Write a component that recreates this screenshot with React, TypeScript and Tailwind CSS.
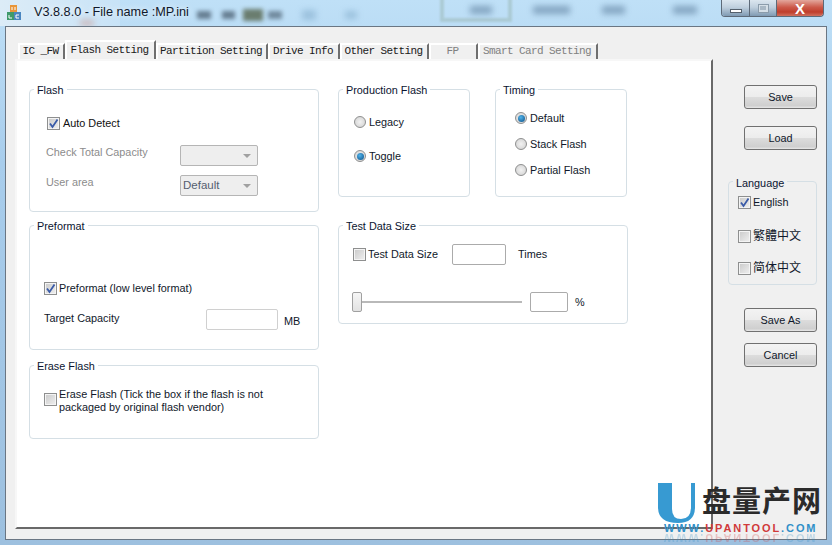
import type { ReactNode } from "react";

const sans = "font-['Liberation_Sans','Noto_Sans_CJK_SC',sans-serif]";

function Group({
  title,
  className,
  children,
}: {
  title: string;
  className: string;
  children?: ReactNode;
}) {
  return (
    <div className={`relative rounded-[4px] border border-[#d5dfe5] ${className}`}>
      <span className="absolute -top-[7px] left-[4px] bg-white px-[3px] leading-[14px] text-[#0a1430]">
        {title}
      </span>
      {children}
    </div>
  );
}

function Check({ on, label, className = "" }: { on?: boolean; label: ReactNode; className?: string }) {
  return (
    <div className={`flex items-center gap-[2px] ${className}`}>
      <span className="flex h-[13px] w-[13px] shrink-0 items-center justify-center border border-[#8e8f8f] bg-[linear-gradient(135deg,#c9c9c9,#f0f0f0)] shadow-[inset_0_0_0_1px_#f4f4f4]">
        {on && (
          <svg width="11" height="11" viewBox="0 0 11 11">
            <path d="M2 5.5 L4.5 9 L9.5 1.5" fill="none" stroke="#3a5ba8" strokeWidth="1.8" />
          </svg>
        )}
      </span>
      <span className="leading-[13px]">{label}</span>
    </div>
  );
}

function Radio({ on, label, className = "" }: { on?: boolean; label: string; className?: string }) {
  return (
    <div className={`flex items-center gap-[3px] ${className}`}>
      <span className="flex h-[12px] w-[12px] shrink-0 items-center justify-center rounded-full border border-[#8e8f8f] bg-[radial-gradient(circle,#f2f2f2,#cfcfcf)]">
        {on && <span className="h-[7px] w-[7px] rounded-full bg-[radial-gradient(circle_at_40%_35%,#4fb2ea,#0b4f86)]" />}
      </span>
      <span className="leading-[14px]">{label}</span>
    </div>
  );
}

function Select({ value, className = "" }: { value?: string; className?: string }) {
  return (
    <div className={`flex h-[21px] w-[78px] items-center justify-between rounded-[2px] border border-[#b5b5b5] bg-[#eeeeee] pl-[2px] pr-[6px] text-[11.5px] text-[#555f70] ${className}`}>
      <span>{value}</span>
      <span className="h-0 w-0 border-x-[4px] border-t-[4px] border-x-transparent border-t-[#a0a0a0]" />
    </div>
  );
}

function Btn({ label, className = "" }: { label: string; className?: string }) {
  return (
    <div className={`ml-[31px] flex h-[24px] w-[73px] items-center justify-center rounded-[3px] border border-[#707070] bg-[linear-gradient(#f3f3f3_0%,#ececec_48%,#dcdcdc_52%,#cfcfcf_90%,#e8e8e8_100%)] leading-none text-[#10182a] ${className}`}>
      {label}
    </div>
  );
}

const tabs = [
  { label: "IC _FW", w: "w-[47px]" },
  { label: "Flash Setting", w: "w-[91px]", active: true },
  { label: "Partition Setting", w: "w-[112px]" },
  { label: "Drive Info", w: "w-[72px]" },
  { label: "Other Setting", w: "w-[89px]" },
  { label: "FP", w: "w-[49px]", off: true },
  { label: "Smart Card Setting", w: "w-[120px]", off: true },
];

function Logo() {
  const url = (
    <>
      <span className="text-[#2f8fc8]">WWW.</span>
      <span className="text-[#d13a3a]">UPANTOOL</span>
      <span className="text-[#2f8fc8]">.COM</span>
    </>
  );
  return (
    <div className="absolute left-[658px] top-[483px] h-[62px] w-[170px]">
      <svg width="38" height="41" viewBox="0 0 38 41" className="absolute left-0 top-0">
        <path
          d="M0 0 H14 V26 Q14 36 23 36 Q33 36 33 24 V0 H37 V24 Q37 40 20 40 Q0 40 0 24 Z"
          fill="#379ad2"
        />
      </svg>
      <div className="absolute left-[44px] top-[-2px] whitespace-nowrap font-['Noto_Sans_CJK_SC',sans-serif] text-[29px] font-bold leading-[36px] tracking-[1px] text-[#2b2b2b]">
        盘量产网
      </div>
      <div className="absolute left-[6px] top-[41px] whitespace-nowrap font-['Liberation_Sans',sans-serif] text-[11px] font-bold leading-[9px] tracking-[1.9px]">
        {url}
      </div>
      <div className="absolute left-[6px] top-[50px] -scale-y-100 whitespace-nowrap font-['Liberation_Sans',sans-serif] text-[11px] font-bold leading-[9px] tracking-[1.9px] opacity-25">
        {url}
      </div>
    </div>
  );
}

export default function App() {
  return (
    <div className={`relative flex h-[545px] w-[832px] flex-col overflow-hidden bg-[linear-gradient(#bfe0f7,#a8cdec_30%,#9dc0df_100%)] text-[10.85px] text-[#10182a] ${sans}`}>
      {/* blurred desktop behind the title bar */}
      <div className="absolute left-0 top-0 h-[26px] w-[120px] bg-[linear-gradient(90deg,#dcecf7,#c8e3f7)]" />
      <div className="absolute left-[80px] top-[20px] h-[6px] w-[14px] bg-[#c98a7c] opacity-50 blur-[3px]" />
      <div className="absolute left-[197px] top-[11px] h-[8px] w-[14px] bg-[#51677a] opacity-80 blur-[2px]" />
      <div className="absolute left-[222px] top-[11px] h-[8px] w-[13px] bg-[#51677a] opacity-80 blur-[2px]" />
      <div className="absolute left-[243px] top-[9px] h-[12px] w-[20px] bg-[#56654e] opacity-80 blur-[2px]" />
      <div className="absolute left-[268px] top-[11px] h-[8px] w-[14px] bg-[#51677a] opacity-70 blur-[2px]" />
      <div className="absolute left-[302px] top-[10px] h-[10px] w-[14px] bg-[#8db5d3] opacity-70 blur-[3px]" />
      <div className="absolute left-[345px] top-[11px] h-[8px] w-[12px] bg-[#8db5d3] opacity-70 blur-[3px]" />
      <div className="absolute left-[440px] top-[-6px] h-[28px] w-[72px] border-[4px] border-[#a7c6cc] opacity-80 blur-[1px]" />
      <div className="absolute left-[470px] top-[6px] h-[8px] w-[22px] bg-[#6a8caa] opacity-70 blur-[3px]" />
      <div className="absolute left-[533px] top-[6px] h-[8px] w-[37px] bg-[#6a8caa] opacity-70 blur-[3px]" />
      <div className="absolute left-[602px] top-[6px] h-[8px] w-[23px] bg-[#6a8caa] opacity-70 blur-[3px]" />
      <div className="absolute left-[673px] top-[6px] h-[8px] w-[24px] bg-[#6a8caa] opacity-70 blur-[3px]" />

      <div className="relative flex h-[26px] shrink-0 items-start">
        <svg width="16" height="16" viewBox="0 0 16 16" className="ml-[6px] mt-[5px]">
          <rect x="4" y="0" width="7" height="7" fill="#e8963a" />
          <rect x="1" y="7" width="7" height="8" fill="#3f9a6a" />
          <rect x="8" y="7" width="7" height="8" fill="#4a86c0" />
          <path d="M6 2 V5 M9 2 V5 M3 10 V13 H6 M13 10 H10 V13 H13" fill="none" stroke="#ffffff" strokeWidth="1" />
        </svg>
        <span className="ml-[12px] mt-[3px] text-[12.7px] leading-[18px] text-[#10182a] [text-shadow:0_0_6px_#ffffff]">
          V3.8.8.0 - File name :MP.ini
        </span>
        <div className="ml-auto mr-[8px] flex h-[17px] w-[103px] overflow-hidden rounded-b-[4px] border border-t-0 border-[#5d6a78]">
          <div className="flex w-[28px] items-end justify-center border-r border-[#5d6a78] bg-[linear-gradient(#dbe6ef,#c0d0de_45%,#7f9ab3)] pb-[3px]">
            <span className="h-[4px] w-[12px] border border-[#55606c] bg-white" />
          </div>
          <div className="flex w-[27px] items-center justify-center border-r border-[#5d6a78] bg-[linear-gradient(#dbe6ef,#c0d0de_45%,#7f9ab3)]">
            <span className="flex h-[9px] w-[11px] items-center justify-center border border-[#8b9cab] bg-[#d5dfe7]">
              <span className="h-[4px] w-[6px] bg-[#a9b8c5]" />
            </span>
          </div>
          <div className="flex flex-1 items-center justify-center bg-[linear-gradient(#e3a79c,#cc5a4a_45%,#bf3e2c_75%,#d0705e)] text-[15px] font-bold leading-none text-white">
            X
          </div>
        </div>
      </div>

      <div className="relative mx-[5px] mb-[5px] flex flex-1 border border-[#6a7683] bg-[#f0f0f0]">
        <div className="ml-[9px] flex w-[698px] shrink-0 flex-col pt-[13px]">
          <div className="flex h-[19px] items-end pl-[3px] font-['Liberation_Mono',monospace] text-[11px] tracking-[-0.6px]">
            {tabs.map((t) => (
              <div
                key={t.label}
                className={`flex items-center justify-center border-l-2 border-r-2 border-t-2 border-l-white border-r-[#6f6f6f] border-t-white pb-[1px] pr-[2px] font-normal ${t.w} ${
                  t.active ? "h-[19px]" : "h-[16px]"
                } ${t.off ? "text-[#808080]" : "text-[#1a1a1a]"}`}
              >
                {t.label}
              </div>
            ))}
          </div>
          <div className="flex h-[470px] gap-[19px] border-2 border-b-[#696969] border-l-[#f7f7f7] border-r-[#696969] border-t-[#f7f7f7] bg-white pl-[12px] pt-[28px]">
            <div className="flex w-[290px] flex-col">
              <Group title="Flash" className="h-[123px] w-[290px] pl-[17px] pt-[27px]">
                <Check on label="Auto Detect" className="!gap-[3px] text-[#101010]" />
                <div className="-ml-px mt-[14px] flex items-center text-[#8c8c8c]">
                  <span className="w-[134px] pb-[7px]">Check Total Capacity</span>
                  <Select />
                </div>
                <div className="-ml-px mt-[7px] flex items-center text-[#8c8c8c]">
                  <span className="w-[134px] pb-[7px]">User area</span>
                  <Select value="Default" />
                </div>
              </Group>
              <Group title="Preformat" className="mt-[13px] h-[125px] w-[290px] pl-[14px] pt-[56px]">
                <Check on label="Preformat (low level format)" />
                <div className="mt-[14px] flex items-center">
                  <span className="w-[162px] pb-[2px]">Target Capacity</span>
                  <span className="h-[21px] w-[72px] rounded-[2px] border border-[#d0d0d0] bg-white" />
                  <span className="ml-[6px] pt-[3px]">MB</span>
                </div>
              </Group>
              <Group title="Erase Flash" className="mt-[15px] h-[74px] w-[290px] pl-[14px] pt-[22px]">
                <Check
                  label={
                    <>
                      Erase Flash (Tick the box if the flash is not
                      <br />
                      packaged by original flash vendor)
                    </>
                  }
                  className="!items-start [&>span:first-child]:mt-[5px]"
                />
              </Group>
            </div>
            <div className="flex w-[290px] flex-col">
              <div className="flex gap-[25px]">
                <Group title="Production Flash" className="h-[108px] w-[132px] pl-[15px] pt-[25px]">
                  <Radio label="Legacy" />
                  <Radio on label="Toggle" className="mt-[20px]" />
                </Group>
                <Group title="Timing" className="h-[108px] w-[132px] pl-[19px] pt-[21px]">
                  <Radio on label="Default" />
                  <Radio label="Stack Flash" className="mt-[12px]" />
                  <Radio label="Partial Flash" className="mt-[12px]" />
                </Group>
              </div>
              <Group title="Test Data Size" className="mt-[28px] h-[99px] w-[290px] pl-[14px] pt-[18px]">
                <div className="flex items-center">
                  <Check label="Test Data Size" className="w-[99px]" />
                  <span className="h-[21px] w-[54px] rounded-[2px] border border-[#ababab] bg-white" />
                  <span className="ml-[12px] pb-[1px]">Times</span>
                </div>
                <div className="mt-[27px] flex items-center">
                  <div className="relative h-[2px] w-[169px] bg-[#b9b9b9]">
                    <span className="absolute -left-px -top-[9px] h-[20px] w-[10px] rounded-[2px] border border-[#a0a0a0] bg-[linear-gradient(#f6f6f6,#e2e2e2)]" />
                  </div>
                  <span className="ml-[8px] h-[20px] w-[38px] rounded-[2px] border border-[#ababab] bg-white" />
                  <span className="ml-[7px]">%</span>
                </div>
              </Group>
            </div>
          </div>
        </div>

        <div className="flex flex-1 flex-col pt-[58px]">
          <Btn label="Save" />
          <Btn label="Load" className="mt-[17px]" />
          <div className="relative ml-[15px] mt-[31px] h-[104px] w-[89px] rounded-[4px] border border-[#d5dfe5] pl-[9px] pt-[14px]">
            <span className="absolute -top-[6px] left-[4px] bg-[#f0f0f0] px-[3px] leading-[14px] text-[#0a1430]">
              Language
            </span>
            <Check on label="English" />
            <Check label={<span className="text-[12px]">繁體中文</span>} className="mt-[21px]" />
            <Check label={<span className="text-[12px]">简体中文</span>} className="mt-[19px]" />
          </div>
          <Btn label="Save As" className="mt-[23px]" />
          <Btn label="Cancel" className="mt-[11px]" />
        </div>
      </div>

      <Logo />
    </div>
  );
}
